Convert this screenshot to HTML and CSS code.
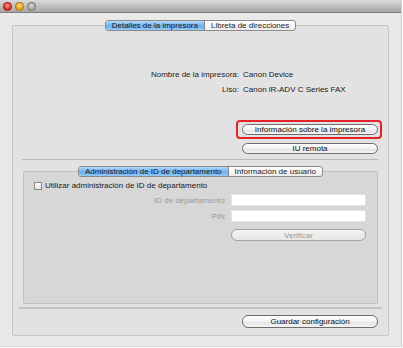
FILE: index.html
```html
<!DOCTYPE html>
<html lang="es">
<head>
  <meta charset="UTF-8">
  <title>Canon Device</title>
  <link rel="stylesheet" href="styles.css">
</head>
<body>
  <div class="window">
    <div class="titlebar">
      <span class="light close"></span>
      <span class="light min"></span>
      <span class="light zoom"></span>
    </div>
    <div class="content">
      <div class="tabs">
        <span class="tab active">Detalles de la impresora</span>
        <span class="tab">Libreta de direcciones</span>
      </div>
      <div class="group outer">
        <div class="info">
          <div class="info-row"><span class="label">Nombre de la impresora:</span><span class="value">Canon Device</span></div>
          <div class="info-row"><span class="label">Liso:</span><span class="value">Canon iR-ADV C Series FAX</span></div>
        </div>
        <div class="actions">
          <div class="highlight">
            <button class="pill">Información sobre la impresora</button>
          </div>
          <button class="pill plain">IU remota</button>
        </div>
        <div class="sep"></div>
        <div class="tabs">
          <span class="tab active">Administración de ID de departamento</span>
          <span class="tab">Información de usuario</span>
        </div>
        <div class="group inner">
          <label class="check"><span class="box"></span>Utilizar administración de ID de departamento</label>
          <div class="form">
            <span class="field-label">ID de departamento:</span>
            <span class="input"></span>
            <span class="field-label">PIN:</span>
            <span class="input"></span>
            <span></span>
            <button class="pill disabled">Verificar</button>
          </div>
        </div>
        <div class="sep thick"></div>
        <div class="footer">
          <button class="pill">Guardar configuración</button>
        </div>
      </div>
    </div>
  </div>
</body>
</html>
```

FILE: styles.css
```css
body {
  margin: 0;
  padding: 0;
  background-color: #fff;
  font-family: "Liberation Sans", Arial, sans-serif;
  font-size: 8px;
  color: #1a1a1a;
}
.window {
  width: 401px;
  height: 346px;
  background-color: #e9e9e9;
  border-right: 1px solid #d0d0d0;
  border-bottom: 1px solid #d6d6d6;
}
.titlebar {
  height: 12px;
  display: flex;
  align-items: center;
  gap: 3px;
  padding-left: 3px;
  background: linear-gradient(#dadada, #a6a6a6);
  border-bottom: 1px solid #7e7e7e;
}
.light {
  width: 9px;
  height: 9px;
  border-radius: 50%;
  box-sizing: border-box;
  border: 1px solid rgba(0, 0, 0, 0.25);
}
.close {
  background: radial-gradient(circle at 50% 35%, #ff9a8a, #d8231b 70%);
}
.min {
  background: radial-gradient(circle at 50% 35%, #ffe27a, #e8950f 70%);
}
.zoom {
  background: radial-gradient(circle at 50% 35%, #d4d4d4, #9e9e9e 70%);
}
.content {
  padding: 7px 12px 0;
  display: flex;
  flex-direction: column;
}
.tabs {
  align-self: center;
  display: flex;
  height: 11px;
  margin-bottom: -6px;
  position: relative;
  z-index: 1;
  border: 1px solid #8a8a8a;
  border-radius: 3px;
  overflow: hidden;
  box-sizing: border-box;
  background: linear-gradient(#ffffff, #ececec);
}
.tab {
  padding: 0 6px;
  line-height: 9px;
  white-space: nowrap;
}
.tab + .tab {
  border-left: 1px solid #8a8a8a;
}
.tab.active {
  background: linear-gradient(#b3dafc, #6aaef0 55%, #96cbf8);
}
.group {
  border: 1px solid #c6c6c6;
  border-radius: 2px;
}
.outer {
  height: 309px;
  background-color: #e2e2e2;
  display: flex;
  flex-direction: column;
}
.info {
  padding-top: 41px;
  display: flex;
  flex-direction: column;
}
.info-row {
  display: grid;
  grid-template-columns: 226px auto;
  column-gap: 4px;
  line-height: 15px;
}
.label {
  text-align: right;
}
.actions {
  margin-top: 23px;
  display: flex;
  flex-direction: column;
  align-items: flex-end;
  gap: 4px;
}
.highlight {
  margin-right: 6px;
  padding: 2px 2px 2px 4px;
  border: 2px solid #e3222a;
  border-radius: 4px;
}
.pill {
  width: 136px;
  height: 11px;
  padding: 0;
  font-family: inherit;
  font-size: 8px;
  line-height: 9px;
  color: #111;
  border: 1px solid #6c6c6c;
  border-radius: 6px;
  background: linear-gradient(#ffffff, #f2f2f2 50%, #e2e2e2 51%, #f4f4f4);
}
.plain {
  margin-right: 10px;
}
.sep {
  height: 1px;
  margin: 5px 10px 6px 9px;
  background-color: #b9b9b9;
}
.sep.thick {
  height: 2px;
  margin: 3px 6px 6px;
  background-color: #c3c3c3;
}
.inner {
  height: 133px;
  margin: 0 10px;
  background-color: #d7d7d7;
  border-color: #c0c0c0;
  box-sizing: border-box;
  padding-top: 9px;
}
.check {
  display: flex;
  align-items: center;
  gap: 3px;
  padding-left: 10px;
  line-height: 10px;
}
.box {
  width: 8px;
  height: 8px;
  box-sizing: border-box;
  border: 1px solid #8a8a8a;
  background: linear-gradient(#fafafa, #e6e6e6);
}
.form {
  display: grid;
  grid-template-columns: 1fr 135px;
  column-gap: 4px;
  row-gap: 4px;
  align-items: center;
  padding: 3px 11px 0 0;
}
.field-label {
  text-align: right;
  color: #9a9a9a;
}
.input {
  height: 12px;
  background-color: #fff;
  border: 1px solid #e4e4e4;
  box-sizing: border-box;
}
.form .pill {
  width: 135px;
  height: 12px;
  margin-top: 3px;
}
.disabled {
  color: #9a9a9a;
  border-color: #a4a4a4;
  background: linear-gradient(#f4f4f4, #e6e6e6);
}
.footer {
  display: flex;
  justify-content: flex-end;
  padding-right: 10px;
}
.footer .pill {
  height: 13px;
}
```
